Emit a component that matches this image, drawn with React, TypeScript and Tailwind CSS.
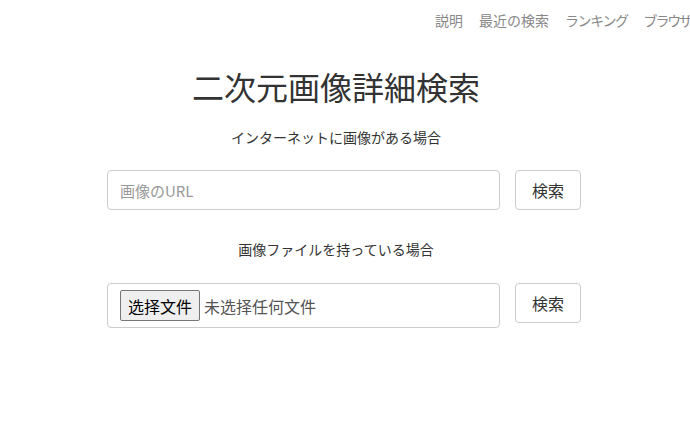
export default function App() {
  const font = { fontFamily: '"Noto Sans CJK JP", "Noto Sans", sans-serif' };
  const sc = { fontFamily: '"Noto Sans CJK SC", sans-serif' };
  const nav = [
    { label: "説明", cls: "" },
    { label: "最近の検索", cls: "" },
    { label: "ランキング", cls: "tracking-[-1.4px]" },
    { label: "ブラウザ", cls: "tracking-[-2.2px]" },
  ];
  return (
    <div className="w-[690px] h-[430px] bg-white text-[#333] overflow-hidden" style={font}>
      {/* Top nav */}
      <nav className="h-10 flex items-center whitespace-nowrap overflow-hidden">
        <ul className="flex shrink-0 text-[14px] text-[#888] pl-[427px]">
          {nav.map((n) => (
            <li key={n.label} className={"px-2 " + n.cls}>{n.label}</li>
          ))}
        </ul>
      </nav>

      <main className="flex flex-col">
        <h1 className="w-[672px] text-center text-[32px] font-normal leading-[35px] mt-[29px]">
          二次元画像詳細検索
        </h1>

        <p className="w-[672px] text-center text-[14px] leading-5 mt-[23px]">
          インターネットに画像がある場合
        </p>

        <form className="flex gap-[15px] ml-[107px] mt-[23px]">
          <input
            type="text"
            placeholder="画像のURL"
            className="w-[393px] h-10 px-3 border border-[#ccc] rounded text-[15px] placeholder:text-[#999] outline-none"
          />
          <button type="button" className="w-[66px] h-10 border border-[#ccc] rounded text-[16px] bg-white">
            検索
          </button>
        </form>

        <p className="w-[672px] text-center text-[14px] leading-5 mt-[29px]">
          画像ファイルを持っている場合
        </p>

        <form className="flex items-start gap-[15px] ml-[107px] mt-[24px]">
          <div className="w-[393px] h-[45px] border border-[#ccc] rounded flex items-center pl-3 gap-1">
            <span
              className="h-[31px] px-[7px] flex items-center bg-[#efefef] border border-[#767676] rounded-[2px] text-[16px] text-black"
              style={sc}
            >
              选择文件
            </span>
            <span className="text-[16px] text-[#555]" style={sc}>
              未选择任何文件
            </span>
          </div>
          <button type="button" className="w-[66px] h-10 border border-[#ccc] rounded text-[16px] bg-white">
            検索
          </button>
        </form>
      </main>
    </div>
  );
}
